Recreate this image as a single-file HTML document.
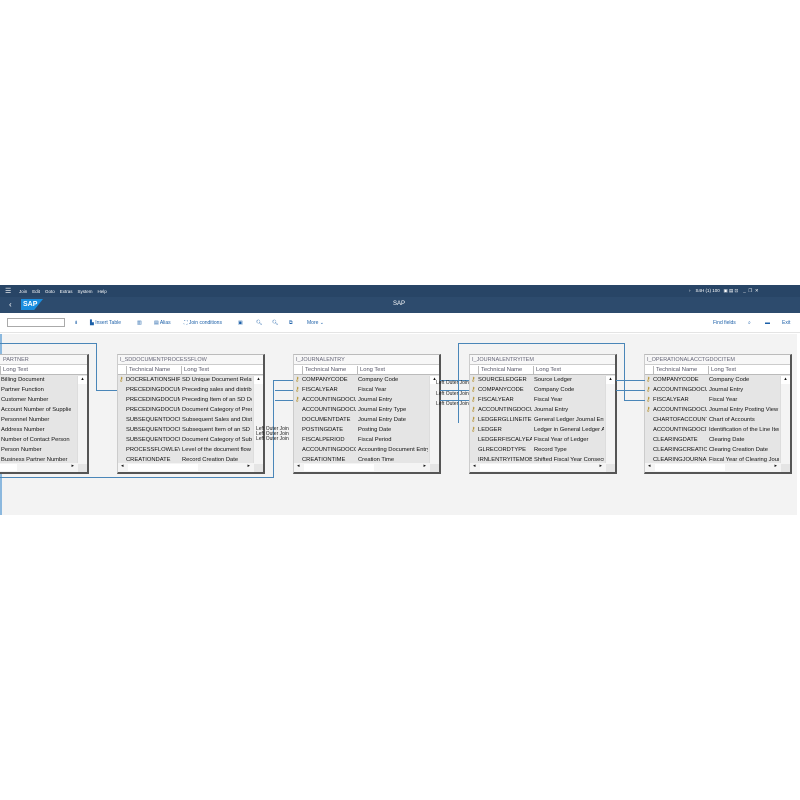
<!DOCTYPE html><html><head><meta charset="utf-8"><style>
*{margin:0;padding:0;box-sizing:border-box}
html,body{width:800px;height:800px;overflow:hidden}
body{background:#fff;position:relative;font-family:"Liberation Sans",sans-serif}
.a{position:absolute}
#c{position:absolute;left:0;top:0;width:800px;height:800px;overflow:hidden}
.t{position:absolute;background:#e5e5e5;border-right:2px solid #555;border-bottom:2px solid #555;border-top:1px solid #bbb;border-left:1px solid #ccc;overflow:hidden;font-size:5.8px;color:#111;white-space:nowrap}
.tt{height:10px;background:#f7f7f7;color:#667;padding:2px 2px;border-bottom:1px solid #ccc;font-size:5.5px}
.hd{height:10px;background:#fff;position:relative;border-bottom:1px solid #bbb}
.hd span{position:absolute;top:1px;color:#556;height:8px;border-left:1px solid #bbb;padding-left:2px;line-height:8px}
.r{height:10px;position:relative;line-height:10px}
.r span{position:absolute}
.vs{position:absolute;width:10px;background:#f4f4f4;border-left:1px solid #ddd}
.hs{position:absolute;height:9px;background:#f4f4f4;left:0}
.lj{position:absolute;font-size:5px;color:#222;line-height:5px}
.k{color:#b08a20;font-size:6px}
</style></head><body>
<div class="a" style="left:0;top:285px;width:800px;height:12px;background:#284566;color:#fff;font-size:4.5px">
<span class="a" style="left:5px;top:2px;font-size:7px">☰</span>
<span class="a" style="left:19px;top:4px">Join&nbsp;&nbsp;&nbsp;&nbsp;Edit&nbsp;&nbsp;&nbsp;&nbsp;Goto&nbsp;&nbsp;&nbsp;&nbsp;Extras&nbsp;&nbsp;&nbsp;&nbsp;System&nbsp;&nbsp;&nbsp;&nbsp;Help</span>
<span class="a" style="left:689px;top:3px">›&nbsp;&nbsp;&nbsp;&nbsp;S4H (1) 100&nbsp;&nbsp;&nbsp;▣ ▤ ⊡&nbsp;&nbsp;&nbsp;&nbsp;_&nbsp;&nbsp;❐&nbsp;&nbsp;✕</span></div>
<div class="a" style="left:0;top:297px;width:800px;height:16px;background:#2d4b6d;color:#fff">
<span class="a" style="left:9px;top:3px;font-size:8px">‹</span>
<span class="a" style="left:21px;top:2px;width:22px;height:11px;background:#1a8ee0;clip-path:polygon(0 0,100% 0,60% 100%,0 100%);font-size:7px;font-weight:bold;padding-left:2px;line-height:11px">SAP</span>
<span class="a" style="left:393px;top:4px;font-size:6px">SAP</span></div>
<div class="a" style="left:0;top:313px;width:800px;height:20px;background:#fff;border-bottom:1px solid #e4e4e4;font-size:5px;color:#1b5fa8">
<div class="a" style="left:7px;top:5px;width:58px;height:9px;border:1px solid #aaa"></div>
<span class="a" style="left:74px;top:7px">⇟</span><span class="a" style="left:90px;top:7px">▙ Insert Table</span><span class="a" style="left:137px;top:7px">▥</span><span class="a" style="left:154px;top:7px">▤ Alias</span><span class="a" style="left:184px;top:7px">⛶ Join conditions</span><span class="a" style="left:238px;top:7px">▣</span><span class="a" style="left:256px;top:7px">🔍︎</span><span class="a" style="left:272px;top:7px">🔍︎</span><span class="a" style="left:289px;top:7px">⧉</span><span class="a" style="left:307px;top:7px">More ⌄</span>
<span class="a" style="left:713px;top:7px">Find fields</span><span class="a" style="left:748px;top:7px">⌕</span><span class="a" style="left:765px;top:7px">▬</span><span class="a" style="left:782px;top:7px">Exit</span></div>
<div class="a" style="left:0;top:334px;width:797px;height:181px;background:#f3f3f3;border-left:2px solid #8bb8de"></div>
<div id="c"></div>
<script>
var T=[
[-64,"I_BUSINESSPARTNER",[["","Billing Document"],["","Partner Function"],["","Customer Number"],["","Account Number of Supplier"],["","Personnel Number"],["","Address Number"],["","Number of Contact Person"],["","Person Number"],["","Business Partner Number"],["","Address Indicator"]],0],
[117,"I_SDDOCUMENTPROCESSFLOW",[["DOCRELATIONSHIPUUID","SD Unique Document Relationship",1],["PRECEDINGDOCUMENT","Preceding sales and distribution"],["PRECEDINGDOCUMENTITEM","Preceding Item of an SD Document"],["PRECEDINGDOCUMENTCAT","Document Category of Preceding"],["SUBSEQUENTDOCUMENT","Subsequent Sales and Distribution"],["SUBSEQUENTDOCUMENTITEM","Subsequent Item of an SD Document"],["SUBSEQUENTDOCUMENTCAT","Document Category of Subsequent"],["PROCESSFLOWLEVEL","Level of the document flow record"],["CREATIONDATE","Record Creation Date"]]],
[293,"I_JOURNALENTRY",[["COMPANYCODE","Company Code",1],["FISCALYEAR","Fiscal Year",1],["ACCOUNTINGDOCUMENT","Journal Entry",1],["ACCOUNTINGDOCUMENTTYPE","Journal Entry Type"],["DOCUMENTDATE","Journal Entry Date"],["POSTINGDATE","Posting Date"],["FISCALPERIOD","Fiscal Period"],["ACCOUNTINGDOCCREATEDBY","Accounting Document Entry Date"],["CREATIONTIME","Creation Time"]]],
[469,"I_JOURNALENTRYITEM",[["SOURCELEDGER","Source Ledger",1],["COMPANYCODE","Company Code",1],["FISCALYEAR","Fiscal Year",1],["ACCOUNTINGDOCUMENT","Journal Entry",1],["LEDGERGLLINEITEM","General Ledger Journal Entry Line",1],["LEDGER","Ledger in General Ledger Accounting",1],["LEDGERFISCALYEAR","Fiscal Year of Ledger"],["GLRECORDTYPE","Record Type"],["IRNLENTRYITEMOBS","Shifted Fiscal Year Consecutive"]]],
[644,"I_OPERATIONALACCTGDOCITEM",[["COMPANYCODE","Company Code",1],["ACCOUNTINGDOCUMENT","Journal Entry",1],["FISCALYEAR","Fiscal Year",1],["ACCOUNTINGDOCUMENTITEM","Journal Entry Posting View Item",1],["CHARTOFACCOUNTS","Chart of Accounts"],["ACCOUNTINGDOCITEM","Identification of the Line Item"],["CLEARINGDATE","Clearing Date"],["CLEARINGCREATIONDATE","Clearing Creation Date"],["CLEARINGJOURNALENTRY","Fiscal Year of Clearing Journal"]]]];
var h="";
T.forEach(function(t){var x=t[0],w=x<0?153:148;
h+='<div class="t" style="left:'+x+'px;top:354px;width:'+w+'px;height:120px">';
h+='<div class="tt">'+(x<0?'<span style="margin-left:64px">PARTNER</span>':t[1])+'</div>';
h+='<div class="hd"><span style="left:8px;width:55px">Technical Name</span><span style="left:63px">Long Text</span></div>';
t[2].forEach(function(r){h+='<div class="r">'+(r[2]?'<span class="k" style="left:1px">⚷</span>':'')+'<span style="left:8px;width:54px;overflow:hidden">'+r[0]+'</span><span style="left:64px;width:70px;overflow:hidden">'+r[1]+'</span></div>'});
h+='<div class="vs" style="right:0;top:21px;height:88px"><div style="background:#fff;height:8px;font-size:5px;text-align:center">▴</div></div>';
h+='<div class="hs" style="top:108px;width:'+(w-12)+'px"><span style="position:absolute;left:3px;font-size:5px">◂</span><div style="position:absolute;left:10px;top:1px;width:70px;height:7px;background:#fff"></div><span style="position:absolute;right:4px;font-size:5px">▸</span></div></div>';});
var L=[[0,343,97,1],[96,343,1,48],[96,390,21,1],[0,477,274,1],[273,380,1,98],[273,380,20,1],[275,390,18,1],[275,400,18,1],[440,380,29,1],[440,390,29,1],[440,400,29,1],[458,343,166,1],[458,343,1,80],[624,343,1,57],[624,400,21,1],[616,380,29,1],[616,390,29,1]];
L.forEach(function(l){h+='<div class="a" style="left:'+l[0]+'px;top:'+l[1]+'px;width:'+l[2]+'px;height:'+l[3]+'px;background:#4a86b8"></div>'});
[[256,427],[256,432],[256,437],[436,381],[436,392],[436,402]].forEach(function(p){h+='<div class="lj" style="left:'+p[0]+'px;top:'+p[1]+'px">Left Outer Join</div>'});
document.getElementById("c").innerHTML=h;
</script></body></html>
